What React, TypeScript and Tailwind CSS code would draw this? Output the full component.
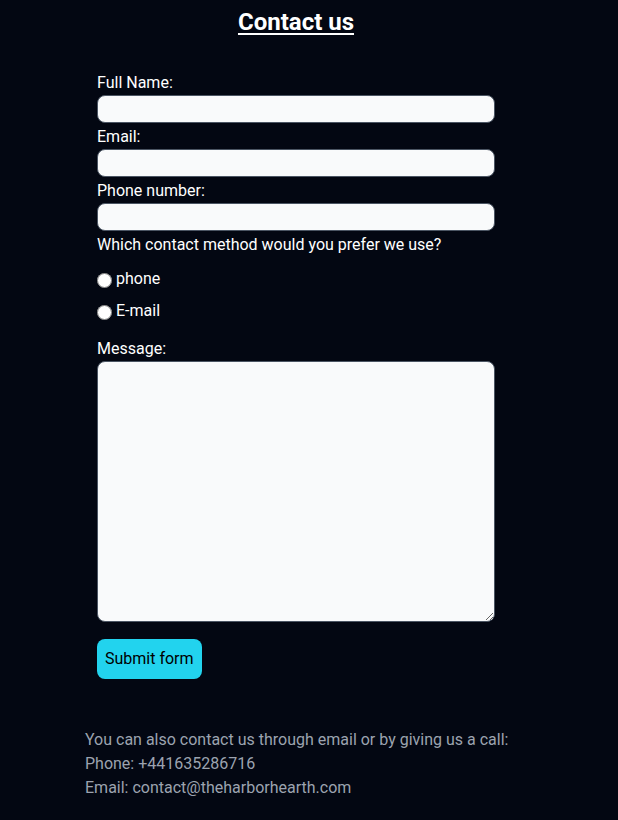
import React from "react";

export default function App() {
  return (
    <div
      className="min-h-screen w-full bg-[#030712] text-white"
      style={{ fontFamily: "Roboto, 'Liberation Sans', sans-serif" }}
    >
      <div className="w-[592px]">
        <h1 className="pt-[6px] text-center text-2xl font-bold underline underline-offset-[3px]">
          Contact us
        </h1>
        <form
          className="ml-[97px] mt-[33px] w-[398px] text-base"
          onSubmit={(e) => e.preventDefault()}
        >
          <label className="block leading-6">Full Name:</label>
          <input
            type="text"
            className="block h-[28px] w-[398px] rounded-lg border border-[#4b5563] bg-[#f9fafb] text-black"
          />
          <label className="mt-[2px] block leading-6">Email:</label>
          <input
            type="email"
            className="block h-[28px] w-[398px] rounded-lg border border-[#4b5563] bg-[#f9fafb] text-black"
          />
          <label className="mt-[2px] block leading-6">Phone number:</label>
          <input
            type="tel"
            className="block h-[28px] w-[398px] rounded-lg border border-[#4b5563] bg-[#f9fafb] text-black"
          />
          <p className="mt-[2px] leading-6">Which contact method would you prefer we use?</p>
          <div className="mt-[10px] flex h-6 items-center">
            <input type="radio" name="method" className="m-0 mr-[4px] mt-[3px] h-[15px] w-[15px]" />
            <span>phone</span>
          </div>
          <div className="mt-2 flex h-6 items-center">
            <input type="radio" name="method" className="m-0 mr-[4px] mt-[3px] h-[15px] w-[15px]" />
            <span>E-mail</span>
          </div>
          <label className="mt-[14px] block leading-6">Message:</label>
          <textarea className="block h-[261px] w-[398px] rounded-lg border border-[#4b5563] bg-[#f9fafb] text-black" />
          <button
            type="submit"
            className="mt-[17px] h-10 rounded-lg bg-[#22d3ee] px-2 text-base leading-6 text-black"
          >
            Submit form
          </button>
        </form>
        <div className="ml-[85px] mt-[49px] text-base leading-6 text-[#9ca3af]">
          <p>You can also contact us through email or by giving us a call:</p>
          <p>Phone: +441635286716</p>
          <p>Email: contact@theharborhearth.com</p>
        </div>
      </div>
    </div>
  );
}
